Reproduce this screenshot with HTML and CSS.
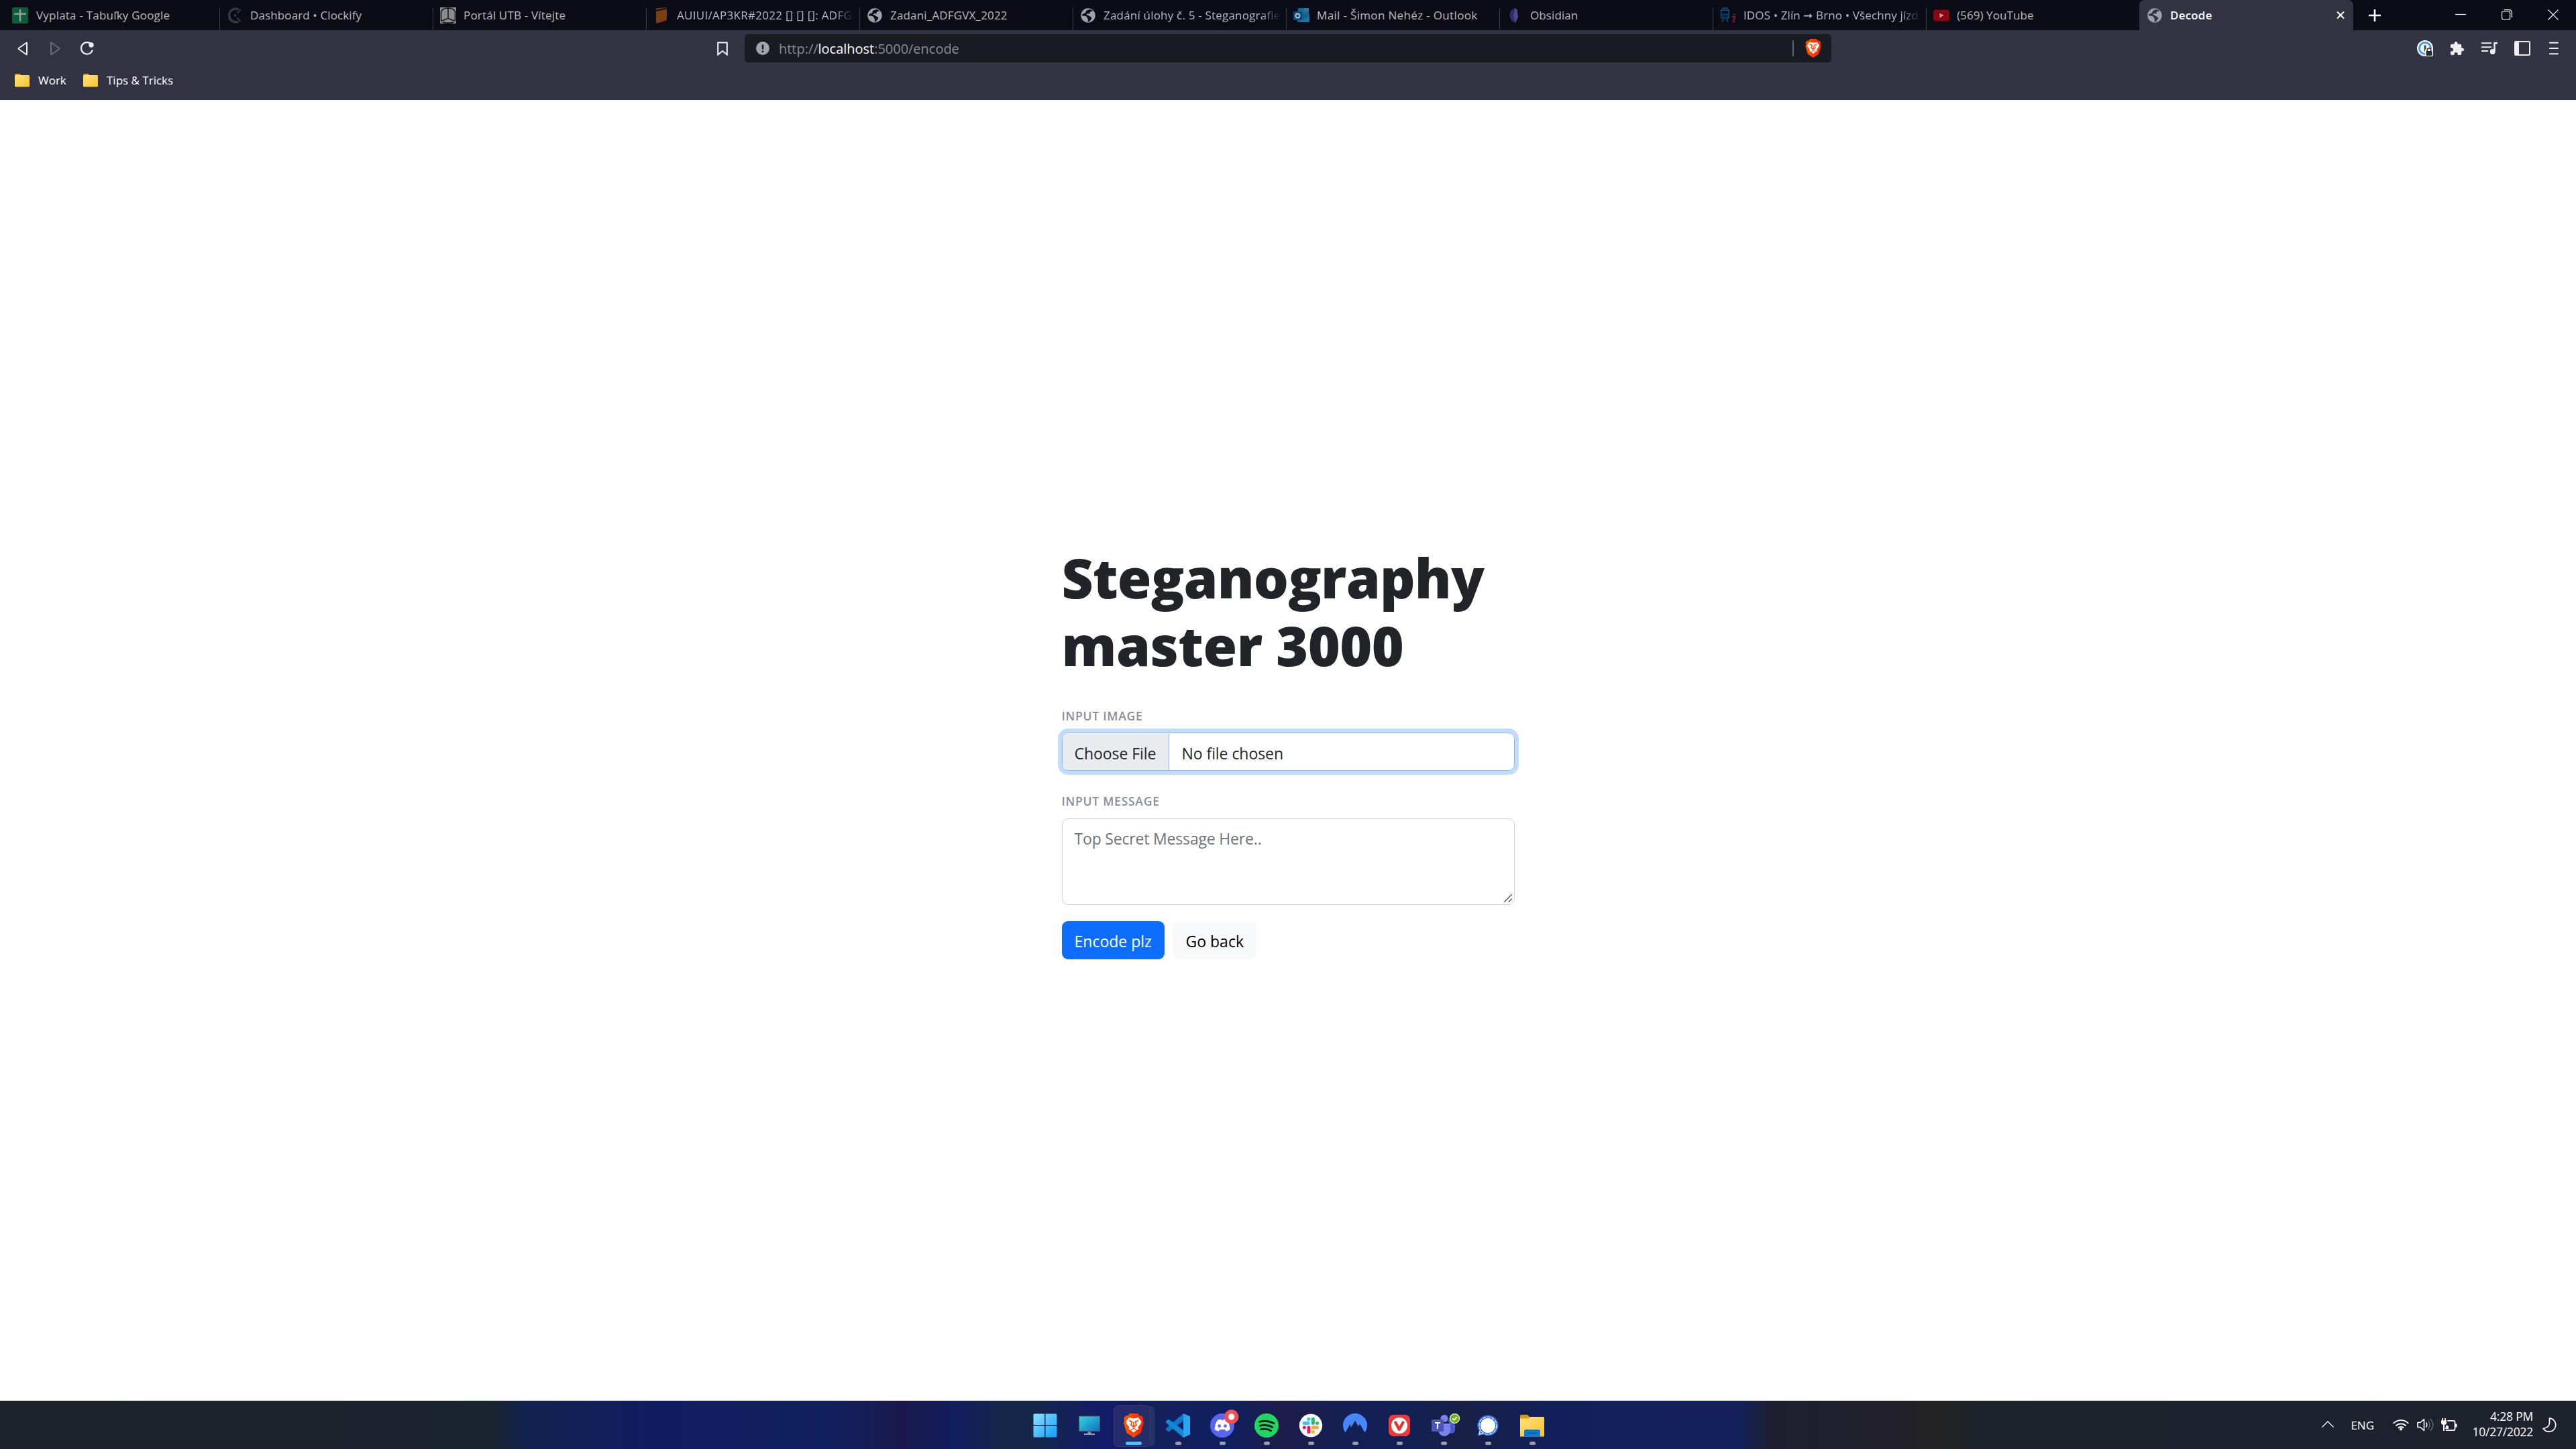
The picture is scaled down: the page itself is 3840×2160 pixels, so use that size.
FILE: index.html
```html
<!DOCTYPE html>
<html lang="en">
<head>
<meta charset="utf-8">
<title>Decode</title>
<link rel="stylesheet" href="styles.css">
</head>
<body>
<svg class="defs" width="0" height="0" aria-hidden="true">
  <defs>
    <linearGradient id="g-folder" x1="0" y1="0" x2="1" y2="1"><stop offset="0" stop-color="#ffe27c"/><stop offset="1" stop-color="#fcc22f"/></linearGradient>
    <linearGradient id="g-win" x1="0" y1="0" x2="1" y2="1"><stop offset="0" stop-color="#8fe4ff"/><stop offset="1" stop-color="#0a9bff"/></linearGradient>
    <linearGradient id="g-screen" x1="0" y1="0" x2="1" y2="1"><stop offset="0" stop-color="#35d5dc"/><stop offset="1" stop-color="#0f6fc0"/></linearGradient>
    <linearGradient id="g-brave" x1="0" y1="0" x2="1" y2="0"><stop offset="0" stop-color="#ff5a00"/><stop offset="1" stop-color="#ff2000"/></linearGradient>
    <symbol id="globe" viewBox="0 0 24 24"><circle cx="12" cy="12" r="10.700" fill="#9da1ab"/><path fill="currentColor" d="M14.500 2.800C13.500 4 11 3.600 9.500 5c-1.500 1.400-.5 2.500-2 3.500-1.700 1-3.500.8-4.500 2.500v1.500c3 0 5.500.2 7 1.500 1 1 .3 2.200 1.500 3 .8.700.3 2.500 0 4.500 2 .3 3-.5 3.500-2 .5-1.300 2-1.500 2.200-3 .2-2-1.500-2.600-3-3.200-1.300-.5-1.500-1.600-3.200-1.800-1.500-.2-1.800-1.200-.8-1.900 1-.8 2.500.4 3.800-.4 1.200-.8.5-2 1.500-2.700 1-.8 2.500-.3 3.800-1.200A10 10 0 0 0 14.500 2.800z"/></symbol>
    <symbol id="folder" viewBox="0 0 24 21"><path d="M1 3a2 2 0 0 1 2-2h5.500l2.500 2.500H1z" fill="#e0a01a"/><rect x="1" y="3" width="22" height="17.500" rx="1.500" fill="url(#g-folder)"/></symbol>
    <symbol id="lion" viewBox="0 0 30 36"><path d="M9 0h12l3 3.500 3-.3 2.700 4.300-.9 3L30 14l-4.500 15L15 36 4.500 29 0 14l1.200-3.500-.9-3L3 3.200l3 .3z" fill="url(#g-brave)"/><path d="M8 6l7 1.400L22 6l4.500 6-1 3.500-4 5 .8 3-2.300 1.200L15 21.500l-5 3.200-2.300-1.200.8-3-4-5-1-3.500z" fill="#fff"/><path d="M11 25.200l4-2.300 4 2.300-4 3.200z" fill="#fff"/><path d="M8 10.500l4.500 1.600-1.500 5 4 3.400 4-3.400-1.500-5L22 10.500M15 13v6" fill="none" stroke="#ff4000" stroke-width="1.700"/></symbol>
  </defs>
</svg>

<header class="browser">
  <div class="tabs">
    <div class="tab tab-first"><svg class="favicon" viewBox="0 0 24 24"><rect width="24" height="24" rx="2" fill="#0c5c37"/><path d="M12 3v18M3 9.700h18" stroke="#9a9a9d" stroke-width="2.600"/></svg><span class="title t-vyplata">Vyplata - Tabuľky Google</span></div>
    <div class="tab"><svg class="favicon" viewBox="0 0 24 24"><path d="M17.500 2.800A10 10 0 1 0 17.500 21.200" fill="none" stroke="#3b3c41" stroke-width="3.400"/><path d="M15.500 8.500l5-5.500M15.500 15.500l5 5.500" stroke="#3b3c41" stroke-width="2"/><circle cx="12.500" cy="12" r="1.900" fill="#3b3c41"/></svg><span class="title t-clock">Dashboard • Clockify</span></div>
    <div class="tab"><svg class="favicon" viewBox="0 0 24 24"><rect width="24" height="24" fill="#8d8d90"/><path d="M12 1v15.500M1 20.500l11-4 11 4M4 3.500 1.500 6v14M20 3.500 22.500 6v14M3 3.500C7 1 10 1 12 1s5 0 9 2.500M4 22q8 2.500 16 0" fill="none" stroke="#15151a" stroke-width="1.600"/></svg><span class="title t-portal">Portál UTB - Vítejte</span></div>
    <div class="tab"><svg class="favicon" viewBox="0 0 24 24"><path d="M4 1.500 20 0v19L5 24l-1-1z" fill="#7b3f15"/><path d="M4 5 19.500 1.500" stroke="#17100f" stroke-width="1.800"/></svg><span class="title fade t-auiui">AUIUI/AP3KR#2022 [] [] []: ADFG(V)X</span></div>
    <div class="tab"><svg class="favicon"><use href="#globe"/></svg><span class="title t-zadani">Zadani_ADFGVX_2022</span></div>
    <div class="tab"><svg class="favicon"><use href="#globe"/></svg><span class="title fade t-uloha">Zadání úlohy č. 5 - Steganografie_2022</span></div>
    <div class="tab"><svg class="favicon" viewBox="0 0 24 24"><rect x="7" y="1" width="16" height="14" fill="#136a96"/><path d="M15 1h8v5h-8z" fill="#247d99"/><path d="M6 10h18v12H6z" fill="#125f92"/><path d="M6 22l18-9v9z" fill="#18779f"/><rect y="6" width="13" height="13" rx="1" fill="#0b4c85"/><circle cx="6.300" cy="12.500" r="3" fill="none" stroke="#c2c2c6" stroke-width="1.800"/></svg><span class="title t-mail">Mail - Šimon Nehéz - Outlook</span></div>
    <div class="tab"><svg class="favicon" viewBox="0 0 24 24"><path d="M12.500 1 15.500 3.500 17 14l-4 9-6-3-3-8 2-7z" fill="#352a6b"/><path d="M12.500 1 15.500 3.500 17 14l-4 9-3-10z" fill="#54478f"/></svg><span class="title t-obs">Obsidian</span></div>
    <div class="tab"><svg class="favicon" viewBox="0 0 24 24"><path d="M3 1.200h9M1.800 4h11.400v11.500H1.800zM1.800 10.500h11.400M5 17l-2 4.500M10 17l2 4.500" fill="none" stroke="#0a4670" stroke-width="1.900"/><circle cx="4.800" cy="13" r="1" fill="#0a4670"/><circle cx="10.200" cy="13" r="1" fill="#0a4670"/><path d="M18 14h4l-2 9" fill="none" stroke="#7a1428" stroke-width="2.600"/><circle cx="21.500" cy="10.500" r="1.400" fill="#17406a"/></svg><span class="title fade t-idos">IDOS • Zlín ➞ Brno • Všechny jízdní řády</span></div>
    <div class="tab"><svg class="favicon" viewBox="0 0 24 24"><rect y="3.500" width="24" height="17" rx="4" fill="#8c0712"/><path d="M9.500 8.500v7l6-3.500z" fill="#b9a9ad"/></svg><span class="title t-yt">(569) YouTube</span></div>
    <div class="tab tab-active"><svg class="favicon"><use href="#globe"/></svg><span class="title t-decode">Decode</span><svg class="tab-close" viewBox="0 0 12 13"><path d="M1 1.500l10 10M11 1.500l-10 10" stroke="#fff" stroke-width="2"/></svg></div>
    <svg class="tab-new" viewBox="0 0 18 18"><path d="M9 0v18M0 9h18" stroke="#fff" stroke-width="2.600"/></svg>
    <div class="window-controls">
      <svg viewBox="0 0 16 16"><path d="M0 7.500h16" stroke="#fff" stroke-width="1.200"/></svg>
      <svg viewBox="0 0 16 16"><rect x=".6" y="3" width="12" height="12" rx="2" fill="none" stroke="#fff" stroke-width="1.200"/><path d="M4 .7h7.500a3.800 3.800 0 0 1 3.800 3.800V12" fill="none" stroke="#fff" stroke-width="1.200"/></svg>
      <svg viewBox="0 0 16 16"><path d="M.5.500l15 15M15.500.500l-15 15" stroke="#fff" stroke-width="1.200"/></svg>
    </div>
  </div>

  <div class="toolbar">
    <div class="nav">
      <svg width="16" height="21" viewBox="0 0 16 21"><path d="M14 2v17q0 .6-.7.200L2 11.200q-1-.7 0-1.400L13.300 1.800q.7-.4.700.2z" fill="none" stroke="#eee" stroke-width="2"/></svg>
      <svg width="16" height="21" viewBox="0 0 16 21"><path d="M2 2v17q0 .6.700.200L14 11.200q1-.7 0-1.400L2.700 1.800Q2 1.400 2 2z" fill="none" stroke="#696b76" stroke-width="2"/></svg>
      <svg class="reload" width="21" height="21" viewBox="0 0 21 21"><path d="M17.500 4.500A8.700 8.700 0 1 0 19 12.500" fill="none" stroke="#eee" stroke-width="2.200"/><circle cx="17" cy="5" r="3.700" fill="#eee"/></svg>
    </div>
    <svg class="bookmark" width="16" height="21" viewBox="0 0 16 21"><path d="M1.200 1.500h13.600v18L8 14l-6.800 5.500z" fill="none" stroke="#eee" stroke-width="2.100"/></svg>
    <div class="address">
      <svg width="20" height="20" viewBox="0 0 20 20"><circle cx="10" cy="10" r="10" fill="#9fa3ad"/><path d="M10 4.500v7" stroke="#181b22" stroke-width="2.600"/><circle cx="10" cy="14.700" r="1.500" fill="#181b22"/></svg>
      <span class="url">http://<b>localhost</b>:5000/encode</span>
      <span class="divider"></span>
      <svg class="shield" width="24" height="28"><use href="#lion"/></svg>
    </div>
    <div class="actions">
      <svg width="24" height="24" viewBox="0 0 24 24"><circle cx="12" cy="12" r="12" fill="#fff"/><circle cx="12" cy="12" r="8.500" fill="none" stroke="#3f9bf5" stroke-width="3"/><rect x="10.500" y="7.500" width="3" height="9" fill="#444"/><rect x="12" y="13" width="12" height="11" rx="2" fill="#fff"/><rect x="13.500" y="16" width="9" height="7" rx="1" fill="#2c2c2c"/><path d="M15.300 16v-1.500a2.700 2.700 0 0 1 5.400 0V16" fill="none" stroke="#2c2c2c" stroke-width="1.600"/></svg>
      <svg width="22" height="22" viewBox="1 0 23 23"><path fill="#eee" d="M20.500 11H19V7c0-1.100-.9-2-2-2h-4V3.500C13 2.120 11.880 1 10.500 1S8 2.120 8 3.500V5H4c-1.100 0-1.990.9-1.990 2v3.800H3.500c1.490 0 2.700 1.210 2.700 2.700s-1.210 2.700-2.700 2.700H2V20c0 1.100.9 2 2 2h3.800v-1.500c0-1.490 1.210-2.700 2.700-2.700 1.490 0 2.700 1.210 2.700 2.700V22H17c1.100 0 2-.9 2-2v-4h1.500c1.380 0 2.500-1.120 2.500-2.500S21.880 11 20.500 11z"/></svg>
      <svg width="24" height="20" viewBox="0 0 24 20"><path d="M0 2.200h15M0 8.200h15M0 14h10" stroke="#eee" stroke-width="2"/><path d="M24 2.200h-4.500V15" fill="none" stroke="#eee" stroke-width="2.400"/><circle cx="16.700" cy="15" r="3.900" fill="#eee"/></svg>
      <svg width="24" height="22" viewBox="0 0 24 22"><rect x="1" y="1" width="22" height="20" rx="1" fill="none" stroke="#eee" stroke-width="2"/><path d="M1 1h6v20H1z" fill="#eee"/></svg>
      <svg class="menu" width="14" height="20" viewBox="0 0 14 20"><path d="M1 1.800h12M1 10h12M1 18.200h12" stroke="#eee" stroke-width="2" stroke-linecap="round"/></svg>
    </div>
  </div>

  <div class="bookmarks">
    <svg width="24" height="21"><use href="#folder"/></svg><span class="bm b-work">Work</span>
    <svg width="24" height="21"><use href="#folder"/></svg><span class="bm b-tips">Tips &amp; Tricks</span>
  </div>
</header>

<main class="page">
  <form class="card">
    <h1><span class="h-a">Steganography</span><br><span class="h-b">master 3000</span></h1>
    <label class="label">Input image</label>
    <div class="file">
      <span class="file-button">Choose File</span>
      <span class="file-name">No file chosen</span>
    </div>
    <label class="label label-message">Input message</label>
    <div class="message">
      <span>Top Secret Message Here..</span>
      <svg class="grip" width="12" height="12" viewBox="0 0 12 12"><path d="M0 12 12 0M6.500 12 12 6.500" stroke="#555" stroke-width="1.400"/></svg>
    </div>
    <div class="buttons">
      <span class="btn btn-primary">Encode plz</span>
      <span class="btn btn-light">Go back</span>
    </div>
  </form>
</main>

<footer class="taskbar">
  <div class="apps">
    <div class="app"><svg width="36" height="36" viewBox="0 0 36 36"><path d="M2 .5h15v16.500H.5V2A1.500 1.500 0 0 1 2 .5zM18.500.5H34A1.500 1.500 0 0 1 35.500 2v15h-17zM.5 18.500H17v17H2A1.500 1.500 0 0 1 .5 34zM18.500 18.500h17V34a1.500 1.500 0 0 1-1.500 1.500H18.500z" fill="url(#g-win)"/></svg></div>
    <div class="app"><svg width="32" height="36" viewBox="0 0 32 36"><rect x=".5" y="4" width="31" height="22.500" fill="url(#g-screen)" stroke="#4a4f58"/><path d="M13.500 27h5v3h-5z" fill="#7b818b"/><path d="M8 30h16v1.800H8z" fill="#b5bac2"/></svg></div>
    <div class="app app-active"><svg width="30" height="36"><use href="#lion"/></svg></div>
    <div class="app app-open"><svg width="36" height="36" viewBox="0 0 36 36"><path d="M26 0v11L4 27.500 0 24.500v-2z" fill="#0b79c6"/><path d="M26 36V25L4 8.500 0 11.500v2z" fill="#1089d8"/><path d="M26 0l10 4.500v27L26 36z" fill="#26a5f2"/></svg></div>
    <div class="app app-open"><svg class="discord" width="44" height="44" viewBox="0 0 44 44"><circle cx="18" cy="24" r="18" fill="#5865f2"/><path d="M11 16q3-1.500 5-1.500l.8 1.500h2.600l.8-1.500q2 0 5 1.500 4.500 7 4.300 14-3 2.300-6 2.500l-1.500-2.500h-7.800L12.700 32.500q-3-.2-6-2.500Q6.500 23 11 16z" fill="#fff"/><circle cx="13.700" cy="24.700" r="2.400" fill="#5865f2"/><circle cx="22.500" cy="24.700" r="2.400" fill="#5865f2"/><circle cx="31.700" cy="11" r="10.700" fill="#ef5150"/><circle cx="31.700" cy="11" r="4.700" fill="#fff"/></svg></div>
    <div class="app app-open"><svg width="36" height="36" viewBox="0 0 36 36"><circle cx="18" cy="18" r="18" fill="#1ed760"/><path d="M7.500 12.500q11.500-3 21.500 2.300M8.500 18.300q10-2.500 18.200 2.200M9.500 23.800q8.500-2 15.200 2" fill="none" stroke="#06120a" stroke-width="2.700" stroke-linecap="round"/></svg></div>
    <div class="app app-open"><svg width="36" height="36" viewBox="0 0 36 36"><circle cx="18" cy="18" r="17.200" fill="#f8f8f8"/><g stroke-width="5" stroke-linecap="round"><path d="M8 14.500h6" stroke="#36c5f0"/><path d="M14.800 8.500h.2" stroke="#36c5f0"/><path d="M21.300 8.300v6.200" stroke="#2eb67d"/><path d="M27.500 14.500h.1" stroke="#2eb67d"/><path d="M21.300 21h6.200" stroke="#ecb22e"/><path d="M21.300 27.300v.1" stroke="#ecb22e"/><path d="M15 21v6.500" stroke="#e01e5a"/><path d="M8.300 21h.1" stroke="#e01e5a"/></g></svg></div>
    <div class="app app-open"><svg width="36" height="36" viewBox="0 0 36 36"><path d="M3.500 28.500A18 18 0 1 1 32.500 28.500L25 15.500l-2 4L18 10.500 12 21l-1.500-5z" fill="#4687ff"/></svg></div>
    <div class="app app-open"><svg width="34" height="34" viewBox="0 0 34 34"><rect x="1" y="1" width="32" height="32" rx="7" fill="#ef3939"/><circle cx="17" cy="17" r="12" fill="#fff"/><path d="M11.300 12.500l5.500 10.300 5.700-10.300" fill="none" stroke="#e23333" stroke-width="4.200" stroke-linecap="round" stroke-linejoin="round"/></svg></div>
    <div class="app app-open"><svg class="teams" width="44" height="38" viewBox="0 0 44 38"><circle cx="31" cy="12" r="5" fill="#5059c9"/><path d="M24 16h12v9a6 6 0 0 1-12 0z" fill="#5059c9"/><circle cx="20" cy="8.500" r="5.500" fill="#7b83eb"/><path d="M11 16h18v10a9 9 0 0 1-18 0z" fill="#7b83eb"/><rect x="1" y="10" width="18" height="18" rx="1.500" fill="#4b53bc"/><path d="M6 15h8M10 15v9" stroke="#fff" stroke-width="2"/><circle cx="35.500" cy="8.500" r="7.600" fill="#fff"/><circle cx="35.500" cy="8.500" r="6.400" fill="#6bb700"/><path d="M32 8.500l2.500 2.500 4.500-4.800" fill="none" stroke="#fff" stroke-width="1.900"/></svg></div>
    <div class="app app-open"><svg width="32" height="32" viewBox="0 0 32 32"><path d="M16 .5A15.400 15.400 0 1 1 9 29.500L.8 31.400 2.800 24A15.400 15.400 0 0 1 16 .5z" fill="#2f6fe8"/><circle cx="16" cy="16" r="13" fill="none" stroke="#fff" stroke-width="1.200" stroke-dasharray="5 1.600"/><circle cx="16" cy="16" r="11" fill="#fff"/><path d="M4.500 23l-1.500 6 5.500-1.300" fill="none" stroke="#fff" stroke-width="1.200"/></svg></div>
    <div class="app app-open"><svg width="36" height="36" viewBox="0 0 36 36"><path d="M0 3.500A1.500 1.500 0 0 1 1.500 2H11l4 4v4H0z" fill="#e39a0c"/><path d="M0 7.500h12l3-2.500h19.500A1.500 1.500 0 0 1 36 6.500V34.500H0z" fill="url(#g-folder)"/><path d="M6 34.500V27a3 3 0 0 1 3-3h18a3 3 0 0 1 3 3v7.500z" fill="#0f78d0"/><path d="M11 29.500h14" stroke="#0a5295" stroke-width="1.600"/></svg></div>
  </div>
  <div class="tray">
    <svg class="chevron" width="18" height="10" viewBox="0 0 18 10"><path d="M.5 9.500 9 1l8.500 8.500" fill="none" stroke="#fff" stroke-width="1.300"/></svg>
    <span class="lang">ENG</span>
    <svg class="wifi" width="24" height="18" viewBox="0 0 24 18"><g fill="none" stroke="#fff" stroke-width="1.800"><path d="M.8 7a15.500 15.500 0 0 1 22.400 0M4.300 10.600a10.800 10.800 0 0 1 15.400 0M7.700 13.800a6 6 0 0 1 8.600 0"/></g><circle cx="12" cy="15.500" r="2.100" fill="#fff"/></svg>
    <svg class="volume" width="25" height="20" viewBox="0 0 25 20"><path d="M1 6.500h4L10.500 1.500v17L5 13.500H1z" fill="none" stroke="#fff" stroke-width="1.600" stroke-linejoin="round"/><path d="M13.500 6.500q2.500 3.500 0 7" fill="none" stroke="#fff" stroke-width="1.600"/><path d="M16.500 3.500q5 6.500 0 13M20 1q7.500 9 0 18" fill="none" stroke="#5c626b" stroke-width="1.600"/></svg>
    <svg class="battery" width="24" height="20" viewBox="0 0 24 20"><path d="M9.500 3.800H18a2.500 2.500 0 0 1 2.500 2.500v9.400a2.500 2.500 0 0 1-2.500 2.500H7" fill="none" stroke="#fff" stroke-width="1.700"/><path d="M21 8.500h2.500v5H21z" fill="#fff"/><path d="M2 0v4M6 0v4" stroke="#fff" stroke-width="1.700"/><path d="M0 3.500h8V7q0 2.500-3 2.700V19H3V9.700Q0 9.500 0 7z" fill="#fff"/><path d="M6 16h5v-4l-3-2" fill="#fff"/></svg>
    <div class="clock"><span class="c-time">4:28 PM</span><span class="c-date">10/27/2022</span></div>
    <svg class="moon" width="21" height="23" viewBox="0 0 21 23"><path d="M10.500 1.200A10 10 0 1 1 1.200 16.500Q10.500 15 10.500 7.500 10.500 4 10.500 1.200z" fill="none" stroke="#fff" stroke-width="1.700" stroke-linejoin="round"/></svg>
  </div>
</footer>
</body>
</html>
```
FILE: styles.css
```css
* { box-sizing: border-box; }
body {
  margin: 0;
  width: 3840px;
  height: 2160px;
  display: flex;
  flex-direction: column;
  overflow: hidden;
  background: #fff;
  font-family: "Open Sans", "Noto Sans", sans-serif;
}
svg { display: block; flex: none; }
.defs { position: absolute; }
span { white-space: pre; }

/* Browser chrome */
.browser { flex: none; height: 149px; background: #323443; }
.tabs { display: flex; height: 45px; padding-left: 7px; background: #0c0c16; }
.tab { position: relative; display: flex; align-items: center; width: 318px; height: 45px; padding: 0 9px 0 11px; font-size: 17px; line-height: 45px; color: #b9b9bd; }
.tab-first { width: 320px; }
.tab:not(.tab-first):not(.tab-active) { background: linear-gradient(#3b3b3b, #3b3b3b) 0 11px / 1px 34px no-repeat; }
.favicon { width: 24px; height: 24px; margin-right: 11px; color: #0c0c16; }
.tab-first .favicon { margin-right: 12px; }
.title { flex: 1; overflow: hidden; }
.fade { -webkit-mask-image: linear-gradient(90deg, #000 235px, transparent 264px); mask-image: linear-gradient(90deg, #000 235px, transparent 264px); }
.t-vyplata { letter-spacing: .21px; }
.t-clock { letter-spacing: .12px; }
.t-portal { letter-spacing: .18px; }
.t-auiui { letter-spacing: .28px; }
.t-zadani { letter-spacing: .17px; }
.t-uloha { letter-spacing: .2px; }
.t-mail { letter-spacing: .34px; }
.t-obs { letter-spacing: .1px; }
.t-idos { letter-spacing: .12px; }
.t-yt { letter-spacing: .08px; }
.t-decode { letter-spacing: .2px; }
.tab-active { width: 319px; padding-right: 13px; background: #323443; border-radius: 8px 8px 0 0; color: #fff; font-weight: 600; }
.tab-active .favicon { color: #323443; }
.tab-close { width: 12px; height: 13px; }
.tab-new { width: 18px; height: 18px; margin: 14px 0 0 23px; }
.window-controls { display: flex; gap: 53px; margin: 14px 26px 0 auto; }
.window-controls svg { width: 16px; height: 16px; }

.toolbar { display: flex; align-items: center; height: 54px; padding: 0 26px; }
.nav { display: flex; gap: 32px; width: 1043px; }
.reload { margin-left: -3px; }
.address { display: flex; align-items: center; width: 1620px; height: 42px; margin-left: 25px; padding: 0 15px 0 17px; border-radius: 6px; background: #181b22; color: #8a8d93; font-size: 20px; line-height: 43px; }
.url { margin-left: 14px; letter-spacing: -.02px; }
.url b { color: #fff; font-weight: 500; }
.divider { width: 2px; height: 24px; margin: 0 17px 0 auto; background: #62656c; }
.actions { display: flex; align-items: center; gap: 25px; width: 211px; margin-left: auto; }
.menu { margin-left: auto; }

.bookmarks { display: flex; align-items: center; height: 41px; padding-left: 21px; color: #fff; font-size: 17px; }
.bm { margin-left: 12px; }
.b-work { width: 46px; margin-right: 20px; }

/* Page */
.page { flex: 1; display: flex; justify-content: center; }
.card { width: 675px; padding-top: 661px; }
h1 { margin: 0; height: 238px; color: #212529; font-size: 82px; font-weight: 800; line-height: 101px; white-space: nowrap; }
.h-a { letter-spacing: -.85px; }
.h-b { letter-spacing: -.55px; }
.label { display: block; height: 44px; line-height: 39px; font-size: 17.5px; font-weight: 600; letter-spacing: .75px; color: #868e96; text-transform: uppercase; }
.file { display: flex; height: 57px; border: 1px solid #86b7fe; border-radius: 9px; box-shadow: 0 0 0 6px #c2dbfe; font-size: 23px; line-height: 58px; color: #212529; }
.file-button { width: 159px; margin-top: 1px; padding-left: 18px; border-right: 1px solid #86b7fe; border-radius: 8px 0 0 8px; background: #e9ecef; letter-spacing: -.05px; }
.file-name { padding: 1px 0 0 19px; letter-spacing: -.06px; }
.label-message { margin-top: 26px; height: 45px; }
.message { position: relative; height: 129px; padding: 11px 18px; border: 1px solid #ced4da; border-radius: 9px; color: #6c757d; font-size: 23px; line-height: 36px; letter-spacing: -.18px; }
.grip { position: absolute; right: 3px; bottom: 3px; }
.buttons { display: flex; gap: 12px; margin-top: 24px; }
.btn { height: 57px; border-radius: 9px; font-size: 23px; line-height: 60px; padding-left: 19px; }
.btn-primary { width: 153px; background: #0d6efd; color: #fff; }
.btn-light { width: 126px; padding-left: 20px; background: #f8f9fa; color: #000; }

/* Taskbar */
.taskbar {
  flex: none;
  display: flex;
  justify-content: space-between;
  height: 72px;
  padding: 0 29px 0 1525px;
  background: linear-gradient(90deg, #1e222a 0, #1a242f 735px, #112250 785px, #101c60 980px, #10205c 1240px, #1a194f 1340px, #111d5c 1430px, #15284a 1500px, #15284a 1540px, #121b68 1645px, #14205a 1720px, #101f60 1830px, #1b1c4a 1910px, #161f52 1990px, #112058 2080px, #182046 2180px, #12205a 2310px, #13205c 2590px, #1d1f30 2640px, #21202b 2820px, #242322 2890px, #1c232b 2950px, #1c222e 3440px, #1e222c 3840px);
}
.apps { display: flex; }
.app { position: relative; display: flex; align-items: center; justify-content: center; width: 66px; height: 72px; }
.app > svg { margin-top: 2px; }
.app > .discord { margin: -2px 0 0 8px; }
.app > .teams { margin-left: 6px; }
.app-open::after, .app-active::after { content: ""; position: absolute; left: 29px; top: 61px; width: 9px; height: 5px; border-radius: 3px; background: #9b9cae; }
.app-active::after { left: 21px; width: 24px; background: #4cc2ff; }
.app-active::before { content: ""; position: absolute; left: 3px; top: 7px; width: 53px; height: 60px; border: 1px solid #3b3e70; border-radius: 7px; background: #ffffff12; box-shadow: 7px 0 0 -1px #ffffff14; }
.app-active > svg { position: relative; }
.tray { display: flex; align-items: center; color: #fff; font-size: 17px; }
.chevron { margin-bottom: 2px; }
.lang { margin: 0 28px 0 25px; }
.volume { margin-left: 12px; }
.battery { margin-left: 11px; }
.clock { display: flex; flex-direction: column; align-items: flex-end; width: 90px; margin: 0 14px 2px 23px; font-size: 17.5px; line-height: 23px; }
.c-time { letter-spacing: -.2px; }
.c-date { letter-spacing: -.25px; }
```
